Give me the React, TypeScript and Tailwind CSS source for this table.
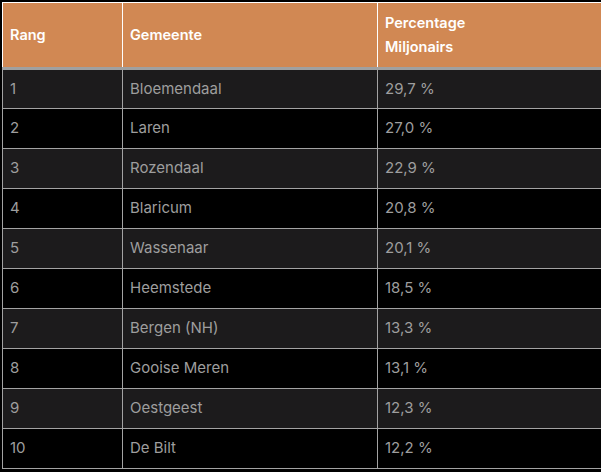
const ROWS = [
  { rank: 1, name: "Bloemendaal", pct: "29,7 %" },
  { rank: 2, name: "Laren", pct: "27,0 %" },
  { rank: 3, name: "Rozendaal", pct: "22,9 %" },
  { rank: 4, name: "Blaricum", pct: "20,8 %" },
  { rank: 5, name: "Wassenaar", pct: "20,1 %" },
  { rank: 6, name: "Heemstede", pct: "18,5 %" },
  { rank: 7, name: "Bergen (NH)", pct: "13,3 %" },
  { rank: 8, name: "Gooise Meren", pct: "13,1 %" },
  { rank: 9, name: "Oestgeest", pct: "12,3 %" },
  { rank: 10, name: "De Bilt", pct: "12,2 %" },
];

export default function App() {
  return (
    <div className="w-[601px] h-[472px] bg-black overflow-hidden p-[2px] font-['Inter',sans-serif]">
      <table className="w-[660px] border-collapse table-fixed">
        <colgroup>
          <col className="w-[120px]" />
          <col className="w-[255px]" />
          <col />
        </colgroup>
        <thead>
          <tr className="bg-[#d18853] text-white text-[14.5px] font-semibold leading-6 text-left">
            <th className="border border-white border-b-[3px] border-b-[#a0a0a0] pl-[7px] h-[66px] font-semibold">Rang</th>
            <th className="border border-white border-b-[3px] border-b-[#a0a0a0] pl-[7px] font-semibold">Gemeente</th>
            <th className="border border-white border-b-[3px] border-b-[#a0a0a0] pl-[7px] font-semibold">
              Percentage
              <br />
              Miljonairs
            </th>
          </tr>
        </thead>
        <tbody>
          {ROWS.map((r, i) => (
            <tr
              key={r.rank}
              className={`${i % 2 === 0 ? "bg-[#1c1b1c]" : "bg-black"} text-[#9e9e9e] text-[15px] h-10`}
            >
              <td className="border border-[#a3a3a3] pl-[7px]">{r.rank}</td>
              <td className="border border-[#a3a3a3] pl-[7px]">{r.name}</td>
              <td className="border border-[#a3a3a3] pl-[7px]">{r.pct}</td>
            </tr>
          ))}
        </tbody>
      </table>
    </div>
  );
}
